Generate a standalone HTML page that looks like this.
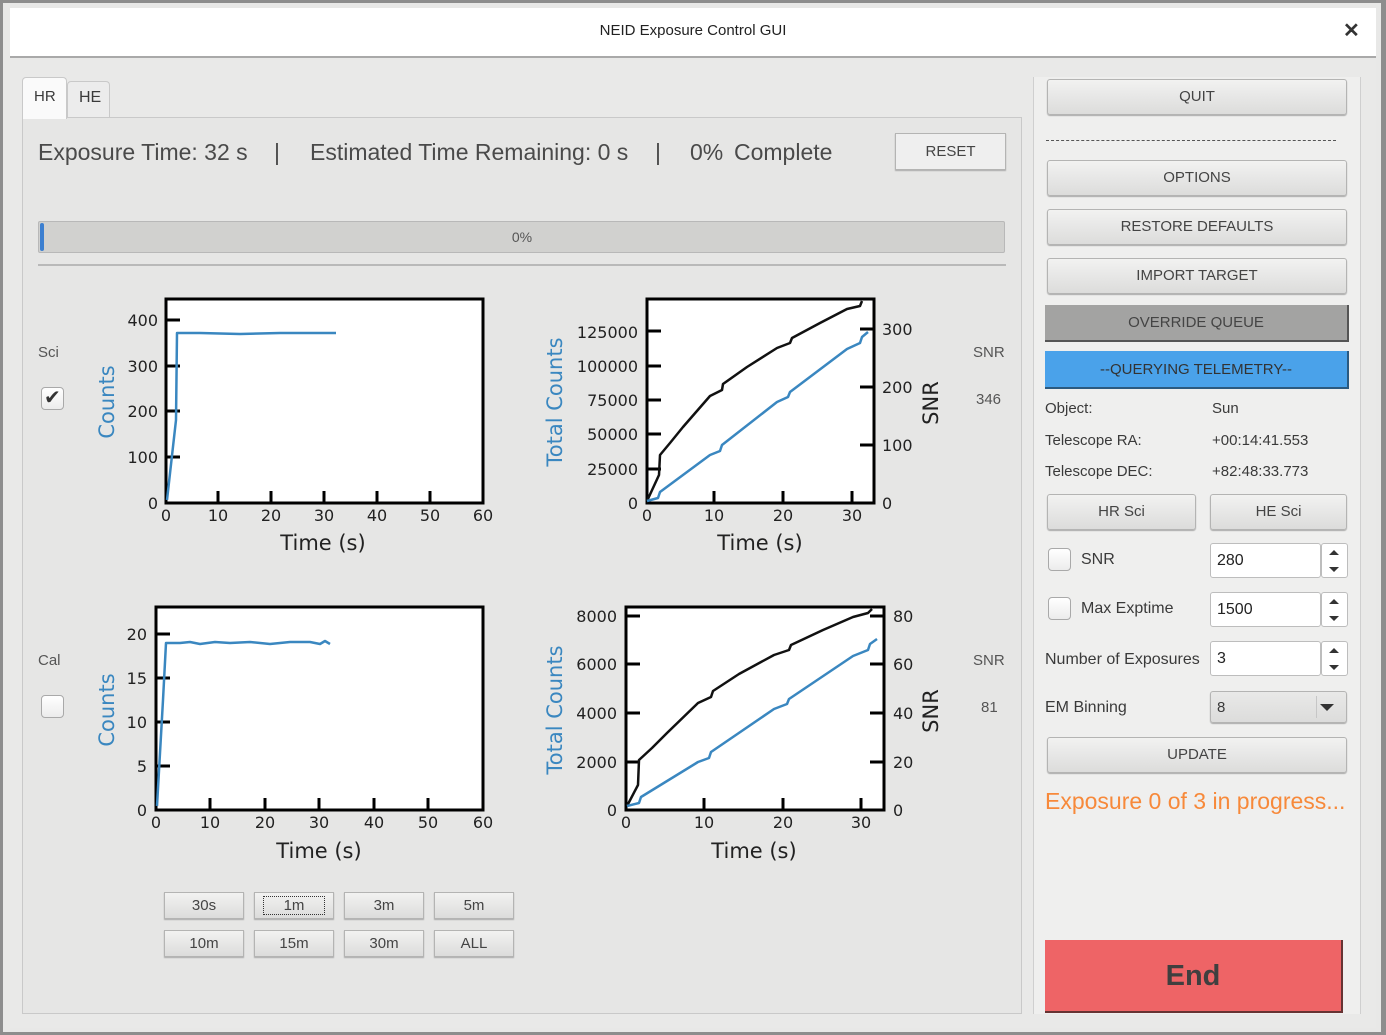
<!DOCTYPE html>
<html><head><meta charset="utf-8">
<style>
*{box-sizing:border-box;margin:0;padding:0}
body{width:1386px;height:1035px;overflow:hidden;background:#fff;font-family:"Liberation Sans",sans-serif;position:relative;color:#3a3a3a}
.a{position:absolute}
.btn{position:absolute;background:linear-gradient(#f2f2f1,#dcdcdb);border:1px solid #b4b4b3;border-radius:3px;box-shadow:0 1px 1px #aaa;text-align:center;font-size:15px;color:#444}
.t{position:absolute;white-space:nowrap}
.s{position:absolute;white-space:nowrap;top:139px;font-size:23px;color:#4a4a4a}
.spin{position:absolute;background:#fff;border:1px solid #bdbdbd;border-radius:3px}
.cb{position:absolute;width:23px;height:23px;border:1px solid #a9a9a9;border-radius:4px;background:linear-gradient(#fff,#ececec)}
</style></head><body>
<div class="a" style="left:0;top:0;width:1386px;height:1035px;border:3px solid #8d8d8d;border-right-width:5px;background:#e8e8e7"></div>
<div class="a" style="left:10px;top:8px;width:1366px;height:50px;background:#fff;border-bottom:2px solid #a9a9a9"></div>
<div class="t" style="left:0;width:1386px;top:22px;text-align:center;font-size:15px;color:#222">NEID Exposure Control GUI</div>
<div class="t" style="left:1343px;top:18px;font-size:20px;font-weight:bold;color:#333">✕</div>
<div class="a" style="left:10px;top:60px;width:1366px;height:968px;background:#e9e9e8"></div>
<div class="a" style="left:22px;top:117px;width:1000px;height:897px;background:#e6e6e5;border:1px solid #c9c9c9"></div>
<div class="a" style="left:22px;top:77px;width:45px;height:42px;background:#fafafa;border:1px solid #c9c9c9;border-bottom:none;border-radius:4px 4px 0 0"></div>
<div class="a" style="left:67px;top:81px;width:43px;height:36px;background:#ececec;border:1px solid #c9c9c9;border-bottom:none;border-radius:4px 4px 0 0"></div>
<div class="t" style="left:34px;top:88px;font-size:15px">HR</div>
<div class="t" style="left:79px;top:89px;font-size:16px">HE</div>
<div class="s" style="left:38px">Exposure Time: 32 s</div>
<div class="s" style="left:274px">|</div>
<div class="s" style="left:310px">Estimated Time Remaining: 0 s</div>
<div class="s" style="left:655px">|</div>
<div class="s" style="left:690px">0%</div>
<div class="s" style="left:734px">Complete</div>
<div class="btn" style="left:895px;top:133px;width:111px;height:37px;line-height:36px;border-radius:0;background:#efefef">RESET</div>
<div class="a" style="left:38px;top:221px;width:967px;height:32px;background:#d1d1cf;border:1px solid #b8b8b8;border-radius:2px"></div>
<div class="a" style="left:40px;top:223px;width:4px;height:28px;background:#3c7fd0;border-radius:2px"></div>
<div class="t" style="left:0;width:1044px;text-align:center;top:229px;font-size:14px;color:#555">0%</div>
<div class="a" style="left:38px;top:264px;width:968px;height:2px;background:#b9b9b9"></div>
<svg class="a" style="left:0;top:0" width="1030" height="1035" font-family="DejaVu Sans, Liberation Sans, sans-serif" font-size="16" fill="#222">
<g stroke="#000" stroke-width="3" fill="#fff">
<rect x="166" y="299" width="317" height="204"/>
<rect x="647" y="299" width="227" height="204"/>
<rect x="156" y="607" width="327" height="203"/>
<rect x="626" y="607" width="258" height="203"/>
</g>
<g stroke="#000" stroke-width="3">
<path d="M166 320h14M166 366h14M166 411h14M166 457h14M218 503v-12M271 503v-12M324 503v-12M377 503v-12M430 503v-12"/>
<path d="M647 331h14M647 366h14M647 400h14M647 434h14M647 469h14M714 503v-12M783 503v-12M852 503v-12M874 329h-14M874 387h-14M874 445h-14"/>
<path d="M156 634h14M156 678h14M156 722h14M156 766h14M210 810v-12M265 810v-12M319 810v-12M374 810v-12M428 810v-12"/>
<path d="M626 616h14M626 664h14M626 713h14M626 762h14M704 810v-12M783 810v-12M861 810v-12M884 616h-14M884 664h-14M884 713h-14M884 762h-14"/>
</g>
<g fill="none" stroke-width="2.5" stroke-linejoin="round">
<path stroke="#3a87c0" d="M167 500L176 420L177 333L200 333L240 334L280 333L336 333"/>
<path stroke="#111" d="M647 501L659 475L660 455L670 443L683 427L710 396L722 390L723 384L747 367L777 348L790 343L792 338L820 323L847 309L860 306L862 301"/>
<path stroke="#3a87c0" d="M647 501L658 498L660 492L710 455L720 451L722 445L777 402L788 397L790 392L847 349L860 343L862 337L868 332"/>
<path stroke="#3a87c0" d="M157 806L163 700L166 643L180 643L190 642L200 644L215 642L230 643L250 642L270 644L290 642L310 642L320 644L325 641L330 644"/>
<path stroke="#111" d="M627 806L638 785L639 760L652 748L667 733L698 703L711 697L713 691L739 674L774 655L789 650L791 645L823 630L853 617L868 613L872 609"/>
<path stroke="#3a87c0" d="M627 806L639 803L641 797L698 762L709 758L711 752L774 709L787 704L789 699L853 656L868 650L870 644L877 639"/>
</g>
<g text-anchor="end">
<text x="158" y="326">400</text><text x="158" y="372">300</text><text x="158" y="417">200</text><text x="158" y="463">100</text><text x="158" y="509">0</text>
<text x="638" y="338">125000</text><text x="638" y="372">100000</text><text x="638" y="406">75000</text><text x="638" y="440">50000</text><text x="638" y="475">25000</text><text x="638" y="509">0</text>
<text x="147" y="640">20</text><text x="147" y="684">15</text><text x="147" y="728">10</text><text x="147" y="772">5</text><text x="147" y="816">0</text>
<text x="617" y="622">8000</text><text x="617" y="670">6000</text><text x="617" y="719">4000</text><text x="617" y="768">2000</text><text x="617" y="816">0</text>
</g>
<g>
<text x="882" y="335">300</text><text x="882" y="393">200</text><text x="882" y="451">100</text><text x="882" y="509">0</text>
<text x="893" y="622">80</text><text x="893" y="670">60</text><text x="893" y="719">40</text><text x="893" y="768">20</text><text x="893" y="816">0</text>
</g>
<g text-anchor="middle">
<text x="166" y="521">0</text><text x="218" y="521">10</text><text x="271" y="521">20</text><text x="324" y="521">30</text><text x="377" y="521">40</text><text x="430" y="521">50</text><text x="483" y="521">60</text>
<text x="647" y="521">0</text><text x="714" y="521">10</text><text x="783" y="521">20</text><text x="852" y="521">30</text>
<text x="156" y="828">0</text><text x="210" y="828">10</text><text x="265" y="828">20</text><text x="319" y="828">30</text><text x="374" y="828">40</text><text x="428" y="828">50</text><text x="483" y="828">60</text>
<text x="626" y="828">0</text><text x="704" y="828">10</text><text x="783" y="828">20</text><text x="861" y="828">30</text>
<g font-size="21"><text x="323" y="550">Time (s)</text><text x="760" y="550">Time (s)</text><text x="319" y="858">Time (s)</text><text x="754" y="858">Time (s)</text></g>
<g font-size="21" fill="#3a87c0">
<text transform="translate(114 402) rotate(-90)">Counts</text>
<text transform="translate(562 402) rotate(-90)">Total Counts</text>
<text transform="translate(114 710) rotate(-90)">Counts</text>
<text transform="translate(562 710) rotate(-90)">Total Counts</text>
</g>
<g font-size="21"><text transform="translate(938 403) rotate(-90)">SNR</text><text transform="translate(938 711) rotate(-90)">SNR</text></g>
</g>
<g font-family="Liberation Sans, sans-serif" font-size="15" fill="#555">
<text x="38" y="357">Sci</text><text x="38" y="665">Cal</text>
<text x="973" y="357">SNR</text><text x="976" y="404">346</text>
<text x="973" y="665">SNR</text><text x="981" y="712">81</text>
</g>
</svg>
<div class="cb" style="left:41px;top:387px"></div>
<div class="t" style="left:44px;top:385px;font-size:20px;color:#333">✔</div>
<div class="cb" style="left:41px;top:695px"></div>
<div class="btn" style="left:164px;top:892px;width:80px;height:27px;line-height:26px;border-radius:0">30s</div>
<div class="btn" style="left:254px;top:892px;width:80px;height:27px;line-height:26px;border-radius:0"><span style="border:1px dotted #333;padding:0 20px">1m</span></div>
<div class="btn" style="left:344px;top:892px;width:80px;height:27px;line-height:26px;border-radius:0">3m</div>
<div class="btn" style="left:434px;top:892px;width:80px;height:27px;line-height:26px;border-radius:0">5m</div>
<div class="btn" style="left:164px;top:930px;width:80px;height:27px;line-height:26px;border-radius:0">10m</div>
<div class="btn" style="left:254px;top:930px;width:80px;height:27px;line-height:26px;border-radius:0">15m</div>
<div class="btn" style="left:344px;top:930px;width:80px;height:27px;line-height:26px;border-radius:0">30m</div>
<div class="btn" style="left:434px;top:930px;width:80px;height:27px;line-height:26px;border-radius:0">ALL</div>
<div class="a" style="left:1033px;top:77px;width:328px;height:937px;background:#efefee;border-left:1px solid #cfcfcf;border-right:1px solid #cfcfcf"></div>
<div class="btn" style="left:1047px;top:79px;width:300px;height:36px;line-height:34px">QUIT</div>
<div class="a" style="left:1046px;top:140px;width:290px;border-top:1px dashed #555"></div>
<div class="btn" style="left:1047px;top:160px;width:300px;height:36px;line-height:34px">OPTIONS</div>
<div class="btn" style="left:1047px;top:209px;width:300px;height:36px;line-height:34px">RESTORE DEFAULTS</div>
<div class="btn" style="left:1047px;top:258px;width:300px;height:36px;line-height:34px">IMPORT TARGET</div>
<div class="a" style="left:1045px;top:305px;width:304px;height:37px;background:#a3a3a2;border-right:2px solid #555;border-bottom:2px solid #555;text-align:center;line-height:36px;font-size:15px;color:#444">OVERRIDE QUEUE</div>
<div class="a" style="left:1045px;top:351px;width:304px;height:38px;background:#4aa2ea;border-right:2px solid #2b5a80;border-bottom:2px solid #2b5a80;text-align:center;line-height:37px;font-size:15px;color:#333">--QUERYING TELEMETRY--</div>
<div class="t" style="left:1045px;top:400px;font-size:15px">Object:</div>
<div class="t" style="left:1212px;top:400px;font-size:15px">Sun</div>
<div class="t" style="left:1045px;top:432px;font-size:15px">Telescope RA:</div>
<div class="t" style="left:1212px;top:432px;font-size:15px">+00:14:41.553</div>
<div class="t" style="left:1045px;top:463px;font-size:15px">Telescope DEC:</div>
<div class="t" style="left:1212px;top:463px;font-size:15px">+82:48:33.773</div>
<div class="btn" style="left:1047px;top:494px;width:149px;height:36px;line-height:34px">HR Sci</div>
<div class="btn" style="left:1210px;top:494px;width:137px;height:36px;line-height:34px">HE Sci</div>
<div class="cb" style="left:1048px;top:548px"></div>
<div class="t" style="left:1081px;top:551px;font-size:16px">SNR</div>
<div class="cb" style="left:1048px;top:597px"></div>
<div class="t" style="left:1081px;top:600px;font-size:16px">Max Exptime</div>
<div class="t" style="left:1045px;top:651px;font-size:16px">Number of Exposures</div>
<div class="t" style="left:1045px;top:699px;font-size:16px">EM Binning</div>
<div class="spin" style="left:1210px;top:543px;width:111px;height:35px"></div><div class="spin" style="left:1321px;top:543px;width:27px;height:35px"></div>
<div class="t" style="left:1217px;top:552px;font-size:16px;color:#222">280</div>
<div class="spin" style="left:1210px;top:592px;width:111px;height:35px"></div><div class="spin" style="left:1321px;top:592px;width:27px;height:35px"></div>
<div class="t" style="left:1217px;top:601px;font-size:16px;color:#222">1500</div>
<div class="spin" style="left:1210px;top:641px;width:111px;height:35px"></div><div class="spin" style="left:1321px;top:641px;width:27px;height:35px"></div>
<div class="t" style="left:1217px;top:650px;font-size:16px;color:#222">3</div>
<svg class="a" style="left:1321px;top:543px" width="27" height="140" fill="#333">
<path d="M8 12h10l-5-5z M8 24h10l-5 5z M8 61h10l-5-5z M8 73h10l-5 5z M8 110h10l-5-5z M8 122h10l-5 5z"/>
</svg>
<div class="btn" style="left:1210px;top:691px;width:137px;height:32px;background:linear-gradient(#e9e9e8,#dcdcdb)"></div>
<div class="t" style="left:1217px;top:699px;font-size:15px">8</div>
<div class="a" style="left:1316px;top:696px;width:1px;height:22px;background:#c6c6c6"></div>
<svg class="a" style="left:1318px;top:700px" width="20" height="14"><path d="M2 4h14l-7 7z" fill="#333"/></svg>
<div class="btn" style="left:1047px;top:737px;width:300px;height:36px;line-height:34px">UPDATE</div>
<div class="t" style="left:1045px;top:788px;font-size:23px;color:#f7893a">Exposure 0 of 3 in progress...</div>
<div class="a" style="left:1045px;top:940px;width:298px;height:73px;background:#ee6466;border-right:2px solid #633;border-bottom:2px solid #633;text-align:center;line-height:72px;font-size:29px;font-weight:bold;color:#3f3f3f">End</div>
</body></html>
